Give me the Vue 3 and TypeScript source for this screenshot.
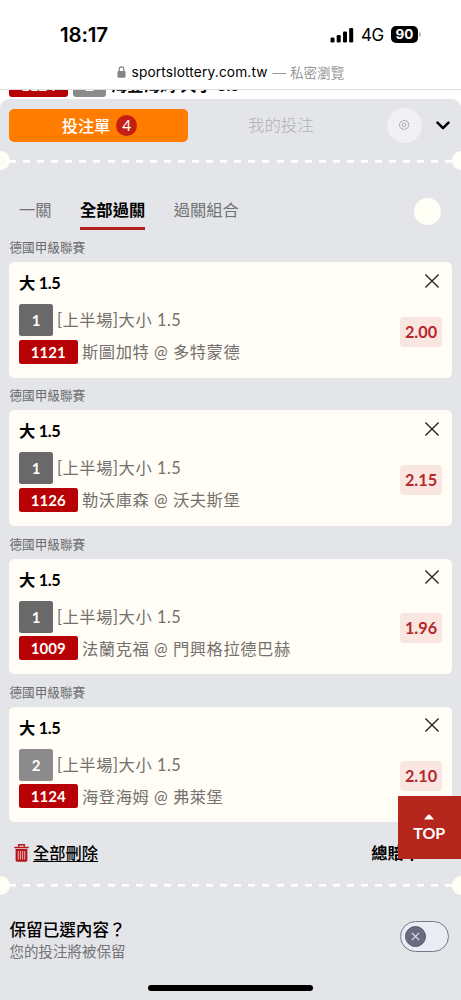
<script setup lang="ts">
interface Bet {
  league: string
  pick: string
  slot: string
  market: string
  code: string
  match: string
  odds: string
  light?: boolean
}

const league = '德國甲級聯賽'
const market = '[上半場]大小 1.5'
const bets: Bet[] = [
  { league, pick: '大 1.5', slot: '1', market, code: '1121', match: '斯圖加特 @ 多特蒙德', odds: '2.00' },
  { league, pick: '大 1.5', slot: '1', market, code: '1126', match: '勒沃庫森 @ 沃夫斯堡', odds: '2.15' },
  { league, pick: '大 1.5', slot: '1', market, code: '1009', match: '法蘭克福 @ 門興格拉德巴赫', odds: '1.96' },
  { league, pick: '大 1.5', slot: '2', market, code: '1124', match: '海登海姆 @ 弗萊堡', odds: '2.10', light: true },
]
</script>

<template>
  <main class="phone">
    <header class="browser">
      <div class="status">
        <span class="clock">18:17</span>
        <svg class="signal" width="24" height="16" viewBox="0 0 24 16">
          <rect x="0.5" y="10.5" width="4" height="5" rx="1.3" />
          <rect x="6.7" y="8" width="4" height="7.5" rx="1.3" />
          <rect x="13" y="4.5" width="4" height="11" rx="1.3" />
          <rect x="19.2" y="1" width="4" height="14.5" rx="1.3" />
        </svg>
        <span class="network">4G</span>
        <span class="battery">90</span>
        <i class="nub"></i>
      </div>
      <div class="address">
        <svg width="9" height="12" viewBox="0 0 9 12">
          <rect x="0.5" y="5" width="8" height="6.7" rx="1.2" fill="#858585" />
          <path d="M2.2 5.5V3.2a2.3 2.3 0 0 1 4.6 0v2.3" fill="none" stroke="#858585" stroke-width="1.2" />
        </svg>
        <span class="host">sportslottery.com.tw</span>
        <span class="private">— 私密瀏覽</span>
      </div>
    </header>

    <div class="peek">
      <div class="peek-row">
        <b class="peek-code">1124</b><b class="peek-slot">2</b><b class="peek-text">海登海姆 大小 3.5</b>
      </div>
    </div>

    <section class="slip">
      <div class="top">
        <button class="slip-tab"><span>投注單</span><i>4</i></button>
        <span class="my-bets">我的投注</span>
        <button class="gear">
          <svg width="12" height="12" viewBox="0 0 12 12" fill="none" stroke="#a2a4a6" stroke-width="0.9">
            <path d="M6 1.2 7.3 1.9 8.8 1.8 9.4 3.2 10.7 4 10.4 5.5 10.9 7 9.8 8.1 9.3 9.5 7.8 9.7 6.5 10.7 5.1 10 3.6 10 2.9 8.7 1.6 7.8 1.9 6.3 1.3 4.9 2.4 3.8 2.9 2.4 4.5 2.2Z" />
            <circle cx="6.1" cy="6" r="1.9" />
          </svg>
        </button>
        <svg class="chevron" width="14" height="9" viewBox="0 0 14 9">
          <path d="M1.5 1.6 7 7.1 12.5 1.6" fill="none" stroke="#000" stroke-width="2.5" stroke-linecap="round" stroke-linejoin="round" />
        </svg>
      </div>

      <div class="divider"><i></i><i></i></div>

      <nav class="tabs">
        <span>一關</span>
        <span class="active">全部過關</span>
        <span>過關組合</span>
        <i class="dot"></i>
      </nav>

      <article v-for="bet in bets" :key="bet.code" class="bet">
        <div class="league">{{ bet.league }}</div>
        <div class="card">
          <div class="info">
            <h3>{{ bet.pick }}</h3>
            <div class="line market">
              <b class="slot" :class="{ light: bet.light }">{{ bet.slot }}</b><span>{{ bet.market }}</span>
            </div>
            <div class="line match">
              <b class="code">{{ bet.code }}</b><span>{{ bet.match }}</span>
            </div>
          </div>
          <div class="side">
            <svg width="16" height="16" viewBox="0 0 16 16">
              <path d="M1.4 1.4 14.6 14.6M14.6 1.4 1.4 14.6" stroke="#282622" stroke-width="1.35" />
            </svg>
            <b class="odds">{{ bet.odds }}</b>
          </div>
        </div>
      </article>

      <div class="summary">
        <svg width="15" height="18" viewBox="0 0 15 18">
          <path d="M4.7 2.5V.7h5.6v1.8M.3 3.4h14.4" fill="none" stroke="#b5161b" stroke-width="1.5" />
          <path d="M1.6 5.1h11.8v11q0 1.6-1.5 1.6H3.1q-1.5 0-1.5-1.6Z" fill="#b5161b" />
          <path d="M4.3 7v8.6M6.4 7v8.6M8.6 7v8.6M10.7 7v8.6" stroke="#e9cdd0" stroke-width=".85" />
        </svg>
        <span class="clear">全部刪除</span>
        <span class="total">總賠率</span>
      </div>

      <div class="divider"><i></i><i></i></div>

      <div class="keep">
        <div>
          <div class="keep-title">保留已選內容？</div>
          <div class="keep-note">您的投注將被保留</div>
        </div>
        <div class="toggle">
          <svg width="21" height="21" viewBox="0 0 21 21">
            <circle cx="10.5" cy="10.5" r="10" fill="#696b81" stroke="#52546d" />
            <path d="M6.8 6.8 14.2 14.2M14.2 6.8 6.8 14.2" stroke="#e4e4ee" stroke-width="1.15" />
          </svg>
        </div>
      </div>
    </section>

    <button class="to-top">
      <svg width="10" height="6" viewBox="0 0 10 6"><path d="M0 5.5 3.8 1q1.2-1 2.4 0L10 5.5Z" fill="#fff" /></svg>
      <span>TOP</span>
    </button>
    <div class="home"></div>
  </main>
</template>

<style>
body { background: #fff; overflow: hidden; }
</style>

<style scoped>
* { box-sizing: border-box; }
.phone {
  position: relative;
  width: 461px;
  height: 1000px;
  overflow: hidden;
  background: #fff;
  font-family: Lato, "Noto Sans CJK TC", sans-serif;
  white-space: nowrap;
  color: #000;
}
i { font-style: normal; }
button { border: 0; padding: 0; font-family: inherit; }
svg { display: block; flex: none; }

.browser { height: 90px; border-bottom: 1px solid #dcdcdc; font-family: Inter, "Noto Sans CJK TC", sans-serif; }
.status { display: flex; align-items: center; height: 54px; padding: 15px 0 0 60px; }
.clock { width: 270px; font-size: 20.5px; font-weight: 600; letter-spacing: -0.2px; }
.network { width: 30px; margin-left: 7px; font-size: 17px; letter-spacing: -0.6px; }
.battery {
  width: 27px; height: 17px; border-radius: 5px; background: #000; color: #fff;
  font-size: 13.5px; font-weight: 700; line-height: 17px; text-align: center;
}
.nub { width: 2px; height: 5px; margin-left: 1px; border-radius: 0 2px 2px 0; background: #bbb; }
.address { display: flex; align-items: center; height: 35px; padding-left: 117px; font-size: 13.7px; }
.host { width: 137px; margin-left: 5.5px; letter-spacing: 0.16px; }
.private { margin-left: 4px; color: #999; font-size: 13.6px; }

.peek { height: 9px; padding-left: 9px; overflow: hidden; }
.peek-row { display: flex; height: 22px; margin-top: -15px; line-height: 20px; color: #fff; text-align: center; }
.peek-code { width: 59px; border-radius: 3px; background: #b80007; font-size: 15px; }
.peek-slot { width: 33px; margin: 0 5px 0 5px; border-radius: 3px; background: #8b8b8b; font-size: 15px; }
.peek-text { color: #000; font-size: 16.3px; line-height: 20px; letter-spacing: 0.05px; }

.slip { height: 901px; border-radius: 9px 9px 0 0; background: #e4e5e8; }
.top { display: flex; align-items: center; height: 52px; padding-left: 9px; }
.slip-tab {
  display: flex; align-items: center; justify-content: center; gap: 6px;
  width: 179px; height: 33px; padding-left: 2px; border-radius: 5px; background: #ff7c00;
  color: #fff; font-size: 16.2px; font-weight: 500;
}
.slip-tab i { width: 21px; height: 21px; border-radius: 50%; background: #c41f12; font-size: 15.5px; font-weight: 400; line-height: 21px; }
.slip-tab span { margin-top: -1px; }
.my-bets { width: 139px; margin-top: -2px; padding-left: 60px; color: #b0b1b4; font-size: 16.4px; font-weight: 300; }
.gear { display: grid; place-items: center; width: 35px; height: 35px; margin-left: 59.5px; border-radius: 50%; background: #f1f1f3; }
.chevron { margin-left: 14px; }

.divider {
  display: flex; justify-content: space-between; align-items: center; height: 19px;
  background: repeating-linear-gradient(90deg, #fff 0 7px, transparent 7px 14.08px) 9px 8.5px / 443px 2.6px no-repeat;
}
.divider i { width: 19px; height: 19px; margin: 0 -9.5px; border-radius: 50%; background: #fffef5; }

.tabs { display: flex; height: 58px; margin-top: 12px; padding: 15px 0 0 19px; font-size: 16.3px; line-height: 25px; color: #717274; }
.tabs span { height: 32.5px; margin-right: 28.5px; }
.tabs .active { border-bottom: 3.5px solid #b3201d; color: #000; font-weight: 700; }
.dot { width: 27px; height: 27px; margin: 0.5px 20px 0 auto; border-radius: 50%; background: #fffef5; }
.bet { height: 148.25px; }
.league { height: 22px; padding-left: 9.5px; color: #6b6c6e; font-size: 12.6px; line-height: 16px; }
.card { display: flex; justify-content: space-between; width: 442.5px; height: 115.5px; margin-left: 9px; padding: 0 9.5px 0 10px; border-radius: 5.5px; background: #fffdf5; }
h3 { height: 42px; margin: 0; padding-top: 9px; font-size: 16.3px; font-weight: 700; line-height: 24px; letter-spacing: -0.3px; }
.line { display: flex; align-items: center; color: #73706e; font-size: 16.3px; letter-spacing: 0.55px; }
.line b { border-radius: 2.5px; color: #fffdf5; font-size: 15px; letter-spacing: 0; text-align: center; }
.slot { width: 34px; height: 32px; background: #696969; line-height: 32px; }
.slot.light { background: #8b8b8b; }
.code { width: 58.5px; height: 24px; background: #b80007; line-height: 24px; }
.market span { margin: -2px 0 0 4px; }
.match { margin-top: 3.5px; }
.match span { margin: -1px 0 0 4.5px; }
.side { display: flex; flex-direction: column; align-items: flex-end; padding-top: 10.5px; }
.side svg { margin-right: 2px; }
.odds { width: 42px; height: 30px; margin-top: 28px; border-radius: 4px; background: #fae6e0; color: #b5292c; font-size: 16.3px; line-height: 30px; text-align: center; }

.summary { display: flex; align-items: center; height: 42.5px; padding: 0 0 2px 13.5px; font-size: 16.3px; font-weight: 500; }
.summary span { margin-top: -2px; }
.clear { margin-left: 4.5px; text-decoration: underline; text-decoration-thickness: 1px; text-underline-offset: 2px; }
.total { margin-left: 273px; font-weight: 700; }
.keep { display: flex; justify-content: space-between; padding: 24px 12px 0 9.5px; }
.keep-title { padding-top: 0.5px; font-size: 16.6px; font-weight: 500; line-height: 23px; }
.keep-note { margin-top: -1px; color: #737477; font-size: 14.5px; line-height: 21px; }
.toggle { display: flex; align-items: center; width: 49px; height: 30.5px; margin-top: 2.5px; padding-left: 4px; border: 1px solid #777986; border-radius: 16px; background: #ebecf4; }
.to-top {
  position: absolute; top: 796px; right: 0; display: flex; flex-direction: column; align-items: center;
  width: 63.5px; height: 63px; padding-top: 18px; background: #b5261c; color: #fff;
}
.to-top span { font-size: 16px; font-weight: 700; line-height: 26px; }
.home { position: absolute; top: 985px; left: 148px; width: 165px; height: 6px; border-radius: 3px; background: #000; }
</style>
